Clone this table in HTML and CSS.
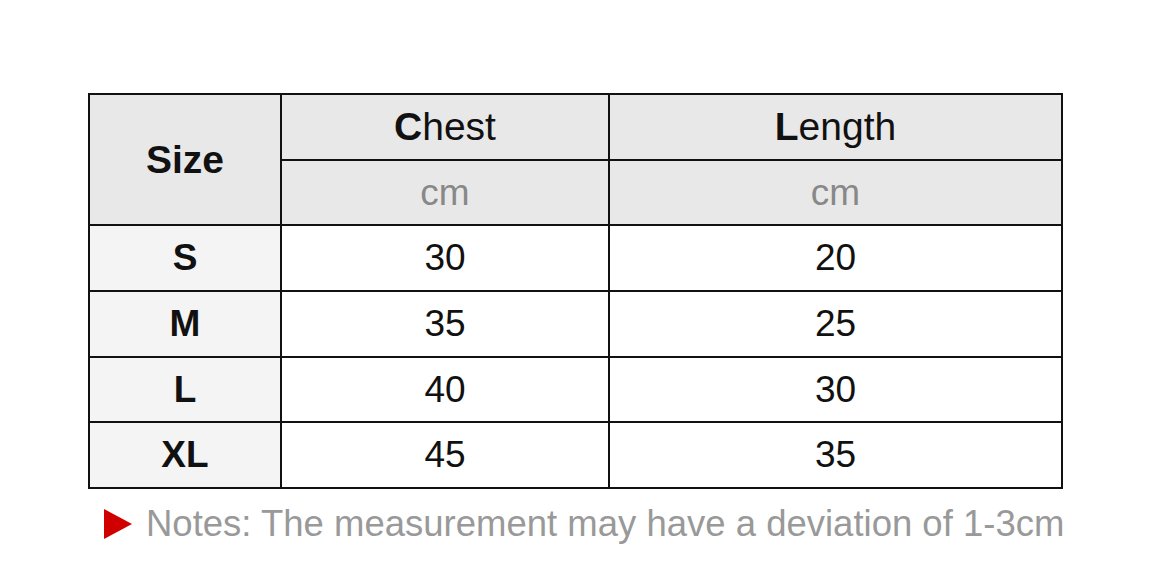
FILE: index.html
```html
<!DOCTYPE html>
<html>
<head>
<meta charset="utf-8">
<link rel="stylesheet" href="styles.css">
</head>
<body>
<div class="wrap">
  <table class="size-table">
    <colgroup>
      <col class="c1"><col class="c2"><col class="c3">
    </colgroup>
    <tr class="head">
      <th rowspan="2" class="size-h">Size</th>
      <th class="title"><b>C</b>hest</th>
      <th class="title"><b>L</b>ength</th>
    </tr>
    <tr class="head">
      <th class="unit">cm</th>
      <th class="unit">cm</th>
    </tr>
    <tr><td class="sz">S</td><td>30</td><td>20</td></tr>
    <tr><td class="sz">M</td><td>35</td><td>25</td></tr>
    <tr><td class="sz">L</td><td>40</td><td>30</td></tr>
    <tr><td class="sz">XL</td><td>45</td><td>35</td></tr>
  </table>
  <div class="notes">
    <svg class="tri" width="28" height="30" viewBox="0 0 28 30"><polygon points="0,0 28,15 0,30" fill="#d10000"/></svg>
    <span>Notes: The measurement may have a deviation of 1-3cm</span>
  </div>
</div>
</body>
</html>
```
FILE: styles.css
```css
html, body {
  margin: 0;
  padding: 0;
  background: #fff;
  font-family: "Liberation Sans", Arial, sans-serif;
}
.wrap {
  padding: 93px 0 0 88px;
}
.size-table {
  border-collapse: collapse;
  border: 2px solid #111;
  table-layout: fixed;
  width: 973px;
}
.c1 { width: 192px; }
.c2 { width: 328px; }
.c3 { width: 453px; }
.size-table th, .size-table td {
  border: 2px solid #111;
  height: 63.7px;
  padding: 0;
  text-align: center;
  vertical-align: middle;
  font-size: 37px;
  color: #111;
}
.size-table th {
  background: #e8e8e8;
  font-weight: normal;
}
.size-table th.title {
  font-size: 39px;
}
.size-table th.size-h {
  font-weight: bold;
  font-size: 39px;
}
.size-table th.unit {
  color: #888;
  font-size: 37px;
}
.size-table td.sz {
  background: #f4f4f4;
  font-weight: bold;
}
.notes {
  display: flex;
  align-items: center;
  gap: 14px;
  margin: 14px 0 0 16px;
  font-size: 36.5px;
  color: #999;
}
.tri { flex: none; }
```
